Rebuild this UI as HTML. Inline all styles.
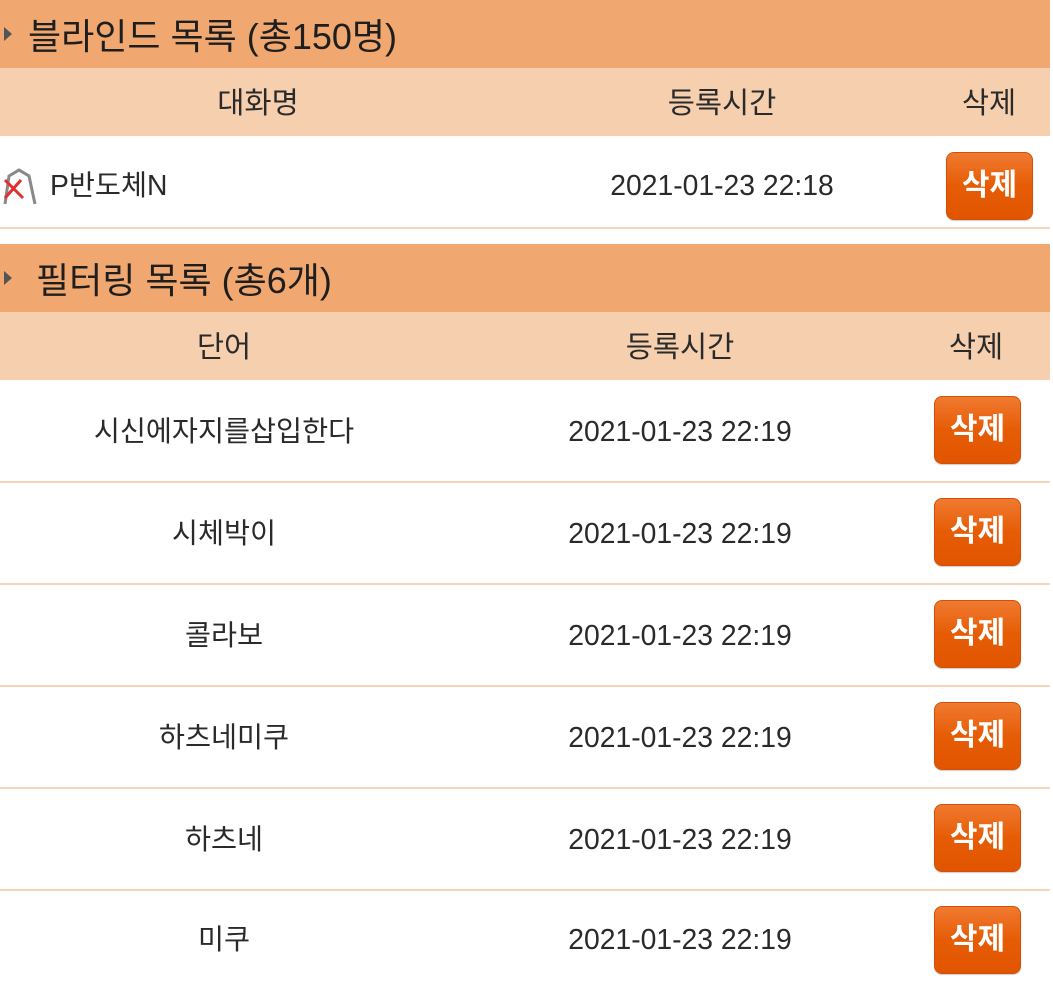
<!DOCTYPE html>
<html><head><meta charset="utf-8"><style>
body{margin:0;width:1053px;height:984px;overflow:hidden;background:#fff;font-family:"Liberation Sans","Noto Sans CJK KR",sans-serif;position:relative}
.a{position:absolute}
.h{left:0;width:1050px;height:68px;background:#f0a870;font-size:36px;color:#1e1e1e;line-height:74px}
.h span.t{position:absolute;left:28px;top:0}
.h .tri{position:absolute;left:4px;top:27px;width:0;height:0;border-left:8px solid #555;border-top:7px solid transparent;border-bottom:7px solid transparent}
.c{left:0;width:1050px;height:68px;background:#f6cfae;font-size:29.5px;color:#2a2a2a;line-height:72px}
.c span,.r span{position:absolute;transform:translateX(-50%);white-space:nowrap}
.r{left:0;width:1050px;font-size:28.3px;color:#2a2a2a}
.b{position:absolute;width:87px;height:68px;border-radius:8px;background:linear-gradient(#f07a30,#e65c05 50%,#e25500);border:1px solid #d35008;box-sizing:border-box;color:#fff;font-size:30px;font-weight:bold;line-height:66px;text-align:center;box-shadow:0 1px 1px rgba(0,0,0,.2)}
.ln{left:0;width:1050px;height:2px;background:#f6d6bb}
</style></head><body>
<div class="a h" style="top:0"><div class="tri"></div><span class="t">블라인드 목록 (총150명)</span></div>
<div class="a c" style="top:68px"><span style="left:258px">대화명</span><span style="left:722px">등록시간</span><span style="left:989px">삭제</span></div>
<div class="a r" style="top:136px;height:92px;line-height:98px">
<svg style="position:absolute;left:1px;top:30px" width="36" height="40" viewBox="0 0 36 40"><path d="M4 38 L8 10 L18 4 L28 10 L34 38" fill="none" stroke="#888" stroke-width="3"/><path d="M4 14 L22 32 M20 14 L4 32" stroke="#e03030" stroke-width="3"/></svg>
<span style="left:50px;transform:none">P반도체N</span><span style="left:722px">2021-01-23 22:18</span>
<div class="b" style="left:946px;top:16px">삭제</div></div>
<div class="a ln" style="top:227px"></div>
<div class="a h" style="top:244px"><div class="tri"></div><span class="t" style="left:36px">필터링 목록 (총6개)</span></div>
<div class="a c" style="top:312px"><span style="left:224px">단어</span><span style="left:680px">등록시간</span><span style="left:976px">삭제</span></div>
<div class="a r" style="top:380px;height:102px;line-height:102px"><span style="left:224px">시신에자지를삽입한다</span><span style="left:680px">2021-01-23 22:19</span><div class="b" style="left:934px;top:16px">삭제</div></div>
<div class="a ln" style="top:481px"></div>
<div class="a r" style="top:482px;height:102px;line-height:102px"><span style="left:224px">시체박이</span><span style="left:680px">2021-01-23 22:19</span><div class="b" style="left:934px;top:16px">삭제</div></div>
<div class="a ln" style="top:583px"></div>
<div class="a r" style="top:584px;height:102px;line-height:102px"><span style="left:224px">콜라보</span><span style="left:680px">2021-01-23 22:19</span><div class="b" style="left:934px;top:16px">삭제</div></div>
<div class="a ln" style="top:685px"></div>
<div class="a r" style="top:686px;height:102px;line-height:102px"><span style="left:224px">하츠네미쿠</span><span style="left:680px">2021-01-23 22:19</span><div class="b" style="left:934px;top:16px">삭제</div></div>
<div class="a ln" style="top:787px"></div>
<div class="a r" style="top:788px;height:102px;line-height:102px"><span style="left:224px">하츠네</span><span style="left:680px">2021-01-23 22:19</span><div class="b" style="left:934px;top:16px">삭제</div></div>
<div class="a ln" style="top:889px"></div>
<div class="a r" style="top:890px;height:94px;line-height:98px"><span style="left:224px">미쿠</span><span style="left:680px">2021-01-23 22:19</span><div class="b" style="left:934px;top:16px">삭제</div></div>
</body></html>
